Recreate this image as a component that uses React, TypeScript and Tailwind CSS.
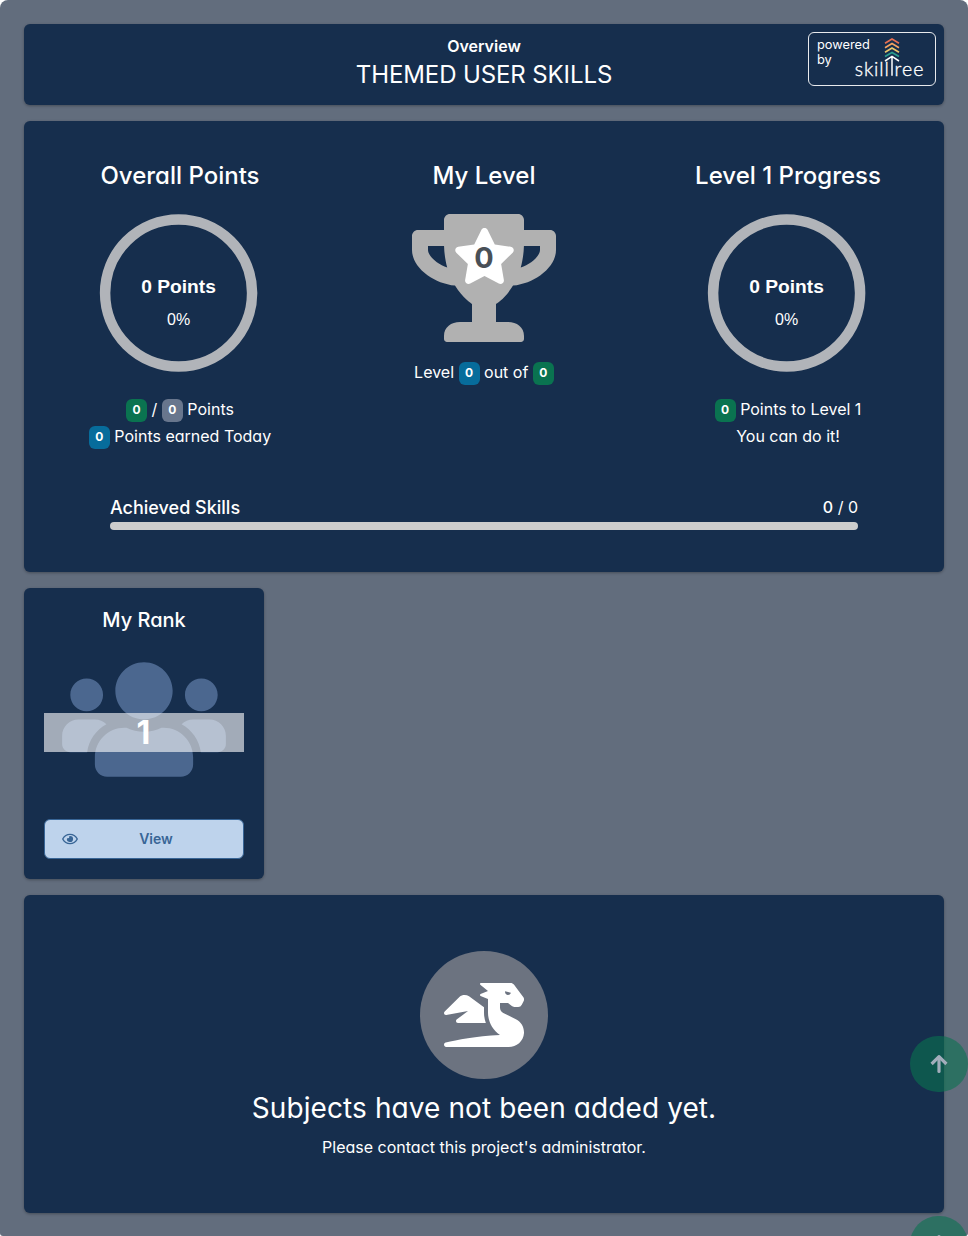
import React from 'react';
import { FaTrophy, FaStar, FaUsers, FaDragon, FaRegEye } from 'react-icons/fa';

function Badge({ color }: { color: string }) {
  return (
    <span className={`relative -top-px inline-flex h-[23px] min-w-[21px] items-center justify-center rounded-md px-1.5 text-[12px] font-bold leading-none ${color}`}>
      0
    </span>
  );
}

function Ring() {
  return (
    <svg viewBox="0 0 158 158" className="relative -left-[2px] mx-auto mt-[22px] block h-[158px] w-[158px] overflow-visible">
      <circle cx="79.6" cy="79" r="73.5" fill="none" stroke="#b1b4b9" strokeWidth="10.5" />
      <text x="79.6" y="79" textAnchor="middle" fill="#fff" fontFamily="Liberation Sans, sans-serif" fontWeight="700" fontSize="19.2">0 Points</text>
      <text x="79.6" y="111" textAnchor="middle" fill="#fff" fontFamily="Liberation Sans, sans-serif" fontSize="16">0%</text>
    </svg>
  );
}

function SkillTreeLogo() {
  return (
    <svg viewBox="0 0 72 42" className="absolute left-[45px] top-[4px] h-[42px] w-[72px]" fill="none">
      <path d="M31 6.2 38 2l7 4.2" stroke="#e76f51" strokeWidth="1.7" />
      <path d="M31 10.7 38 6.5l7 4.2" stroke="#f4a261" strokeWidth="1.7" />
      <path d="M31 15.2 38 11l7 4.2" stroke="#e9c46a" strokeWidth="1.7" />
      <path d="M31 19.6 38 15.4l7 4.2" stroke="#2a9d8f" strokeWidth="1.7" />
      <path d="M31 24 38 19.4l7 4.6M38 20v18.7" stroke="#fff" strokeWidth="1.5" />
      <text x="0.8" y="38.7" fill="#fff" stroke="#fff" strokeWidth="0.35" fontFamily="Lato, sans-serif" fontWeight="300" fontSize="19.5" textLength="34" lengthAdjust="spacing">skill</text>
      <text x="40.5" y="38.7" fill="#fff" stroke="#fff" strokeWidth="0.35" fontFamily="Lato, sans-serif" fontWeight="300" fontSize="19.5" textLength="29" lengthAdjust="spacing">ree</text>
    </svg>
  );
}

function ScrollTopIcon() {
  return (
    <svg viewBox="0 0 18 19" className="relative -top-px h-[19px] w-[18px]" fill="none" stroke="#a3adbb" strokeWidth="3.2" strokeLinejoin="round">
      <path d="M1.6 10 9 2.6l7.4 7.4" />
      <path d="M9 3v14.4" strokeLinecap="round" />
    </svg>
  );
}

export default function App() {
  const card = 'rounded-md bg-[#162e4d] shadow-[0_1px_3px_rgba(0,0,0,0.3)]';
  return (
    <div className="relative h-[1236px] w-[968px] overflow-hidden rounded-t-lg rounded-b-[3px] bg-[#626d7d] p-6 font-[Inter,sans-serif] text-base text-white [font-feature-settings:'cv02','cv03','cv04','cv11']">
      <header className={`relative h-[81px] pt-[10px] text-center ${card}`}>
        <div className="text-base font-semibold leading-6">Overview</div>
        <h1 className="mt-px text-2xl font-normal leading-8 tracking-[-0.11px]">THEMED USER SKILLS</h1>
        <div className="absolute right-2 top-2 h-[54px] w-32 rounded-md border border-white/90 px-2 pt-1 text-left text-[12.8px] leading-[15px]">
          powered<br />by
          <SkillTreeLogo />
        </div>
      </header>

      <section className={`mt-4 h-[451px] px-1 pt-[39px] ${card}`}>
        <div className="grid grid-cols-3 text-center">
          <div>
            <h2 className="text-2xl font-medium leading-8">Overall Points</h2>
            <Ring />
            <div className="mt-6 leading-[27px]">
              <div><Badge color="bg-[#0a7350]" /> / <Badge color="bg-[#68768d]" /> Points</div>
              <div><Badge color="bg-[#076c9b]" /> Points earned Today</div>
            </div>
          </div>
          <div>
            <h2 className="text-2xl font-medium leading-8">My Level</h2>
            <div className="relative mx-auto mt-[22px] h-32 w-36">
              <FaTrophy className="h-32 w-36 text-[#b1b1b1]" />
              <FaStar className="absolute left-[41px] top-[12px] h-[60px] w-[63px] text-white" />
              <span className="absolute inset-x-0 top-[24px] text-[28.8px] font-bold leading-10 text-[#495057]">0</span>
            </div>
            <div className="mt-[17px] leading-[27px]">Level <Badge color="bg-[#076c9b]" /> out of <Badge color="bg-[#0a7350]" /></div>
          </div>
          <div>
            <h2 className="text-2xl font-medium leading-8">Level 1 Progress</h2>
            <Ring />
            <div className="mt-6 leading-[27px]">
              <div><Badge color="bg-[#0a7350]" /> Points to Level 1</div>
              <div>You can do it!</div>
            </div>
          </div>
        </div>
        <div className="mx-[82px] mt-[46px]">
          <div className="flex h-6 justify-between">
            <span className="text-lg font-medium leading-6">Achieved Skills</span>
            <span className="leading-[22px]"><span className="font-medium">0</span> / 0</span>
          </div>
          <div className="mt-[2px] h-2 rounded bg-[#cdcdcd]" />
        </div>
      </section>

      <section className={`mt-4 h-[291px] w-60 px-5 pt-[18px] text-center ${card}`}>
        <h2 className="text-xl font-medium leading-7">My Rank</h2>
        <div className="relative mt-[20px] h-[131px]">
          <FaUsers className="mx-auto h-[131px] w-[164px] text-[#4b678f]" />
          <div className="absolute inset-x-0 top-[59px] h-[39px] bg-[#f8f9fa]/62 pr-px text-[32px] font-bold leading-[39px]">1</div>
        </div>
        <button className="mt-[34px] flex h-10 w-full items-center rounded-md border border-[#386596] bg-[#bed3ec] px-[17px] text-sm font-semibold text-[#386596]">
          <FaRegEye className="h-[14px] w-4" />
          <span className="flex-1 pl-[8px]">View</span>
        </button>
      </section>

      <section className={`mt-4 h-[318px] pt-14 text-center ${card}`}>
        <div className="mx-auto flex size-32 items-center justify-center rounded-full bg-[#6c7380]">
          <FaDragon className="h-16 w-20" />
        </div>
        <h2 className="mt-3 text-[28px] font-normal leading-[34px] tracking-[0.09px]">Subjects have not been added yet.</h2>
        <p className="mt-[10px] leading-6">Please contact this project's administrator.</p>
      </section>

      <div className="absolute left-[910px] top-[1036px] flex h-14 w-[58px] items-center justify-center rounded-full bg-[#0a7350]/60">
        <ScrollTopIcon />
      </div>
      <div className="absolute left-[910px] top-[1216px] flex h-14 w-[58px] items-center justify-center rounded-full bg-[#0a7350]/60">
        <ScrollTopIcon />
      </div>
    </div>
  );
}
